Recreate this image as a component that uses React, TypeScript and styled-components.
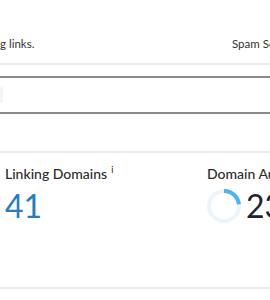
import React from "react";
import styled, { createGlobalStyle } from "styled-components";

const GlobalStyle = createGlobalStyle`
  html, body {
    margin: 0;
    padding: 0;
    background: #ffffff;
  }
  body {
    font-family: Lato, "Open Sans", sans-serif;
    overflow: hidden;
  }
`;

const Page = styled.div`
  width: 270px;
  height: 300px;
  overflow: hidden;
`;

const IntroRow = styled.div`
  display: grid;
  grid-template-columns: 232px 1fr;
  padding-top: 37px;
  margin-bottom: 12px;
  font-size: 11.5px;
  line-height: 14px;
  color: #333;
  white-space: nowrap;
`;

const Divider = styled.div<{ $gap?: number }>`
  height: 2px;
  background: #e8ecec;
  margin-bottom: ${({ $gap }) => $gap ?? 0}px;
`;

const SearchBox = styled.div`
  display: flex;
  align-items: center;
  margin: 0 -20px 0 -20px;
  height: 34px;
  border-top: 2px solid #8a8a8a;
  border-bottom: 2px solid #8a8a8a;
  box-sizing: content-box;
`;

const InputEnd = styled.div`
  width: 23px;
  height: 16px;
  background: #f4f4f4;
  border-radius: 0 2px 2px 0;
`;

const Metrics = styled.div`
  display: grid;
  grid-template-columns: 202px 1fr;
  padding: 12px 0 0 5px;
  height: 122px;
  white-space: nowrap;
`;

const Metric = styled.div`
  display: flex;
  flex-direction: column;
  gap: 6px;
`;

const Label = styled.div`
  font-size: 14px;
  font-weight: 500;
  line-height: 18px;
  color: #2c2c2c;
`;

const Info = styled.sup`
  font-size: 9px;
  margin-left: 4px;
  vertical-align: 6px;
  line-height: 0;
`;

const ValueRow = styled.div`
  display: flex;
  align-items: center;
  gap: 5px;
`;

const Value = styled.div<{ $tone: "link" | "dark" }>`
  font-size: 32px;
  font-weight: 400;
  line-height: 34px;
  color: ${({ $tone }) => ($tone === "link" ? "#2b7bbf" : "#23232f")};
`;

const Donut = ({ pct }: { pct: number }) => {
  const r = 15;
  const c = 2 * Math.PI * r;
  return (
    <svg width="34" height="34" viewBox="0 0 34 34">
      <circle cx="17" cy="17" r={r} fill="none" stroke="#ecf5fa" strokeWidth="4" />
      <circle
        cx="17"
        cy="17"
        r={r}
        fill="none"
        stroke="#4db3ea"
        strokeWidth="4"
        strokeDasharray={`${(c * pct) / 100} ${c}`}
        transform="rotate(-90 17 17)"
      />
    </svg>
  );
};

export default function App() {
  return (
    <Page>
      <GlobalStyle />
      <IntroRow>
        <span>g links.</span>
        <span>Spam Score</span>
      </IntroRow>
      <Divider $gap={11} />
      <SearchBox>
        <InputEnd />
      </SearchBox>
      <Divider style={{ marginTop: 37 }} />
      <Metrics>
        <Metric>
          <Label>
            Linking Domains<Info>i</Info>
          </Label>
          <Value $tone="link">41</Value>
        </Metric>
        <Metric>
          <Label>Domain Authority</Label>
          <ValueRow>
            <Donut pct={23} />
            <Value $tone="dark">23</Value>
          </ValueRow>
        </Metric>
      </Metrics>
      <Divider />
    </Page>
  );
}
